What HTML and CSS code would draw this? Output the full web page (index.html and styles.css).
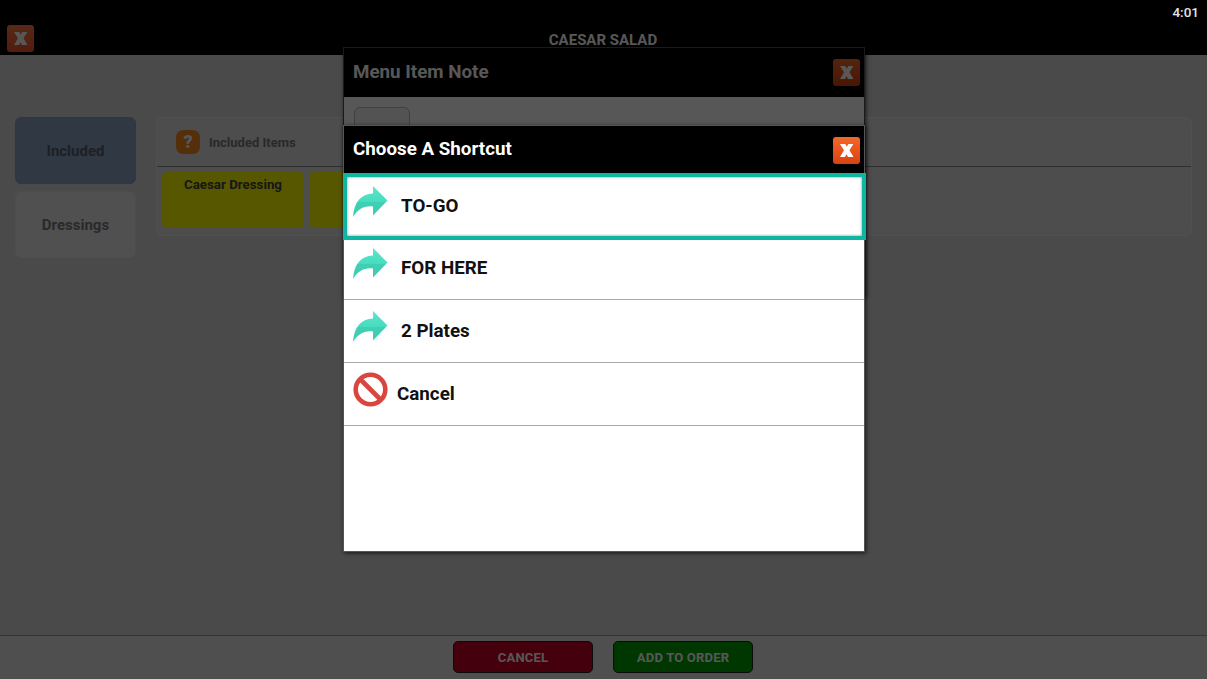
FILE: index.html
```html
<!DOCTYPE html>
<html lang="en">
<head>
    <meta charset="UTF-8">
    <title>Caesar Salad</title>
    <link rel="stylesheet" href="styles.css">
</head>
<body>
    <svg class="defs" width="0" height="0">
        <defs>
            <linearGradient id="arrow_fill" x1="0" y1="0" x2="0" y2="1">
                <stop offset="0" stop-color="#5ce6cb"/>
                <stop offset="0.5" stop-color="#48dcbf"/>
                <stop offset="0.52" stop-color="#3fcfb2"/>
                <stop offset="1" stop-color="#3fcdb0"/>
            </linearGradient>
            <symbol id="arrow" viewBox="0 0 35 31">
                <path d="M0 31C1 16 8 8 20 7.500V0L34.500 14.500 20 29.500V20.500C11 19.500 5 23 0 31Z" fill="url(#arrow_fill)"/>
            </symbol>
            <symbol id="close" viewBox="0 0 27 27">
                <path d="M7 7H12.300L13.800 9.800 15.300 7H20.300L16.500 13.300 20.500 20H15L13.500 17.200 12 20H7L11 13.300Z" fill="#fff"/>
            </symbol>
        </defs>
    </svg>

    <div class="screen">
        <header class="top-bar">
            <button type="button" class="close-btn close-btn-base"><svg><use href="#close"/></svg></button>
            <div class="top-title">CAESAR SALAD</div>
        </header>

        <main class="content">
            <nav class="side">
                <div class="side-btn side-btn-active">Included</div>
                <div class="side-btn">Dressings</div>
            </nav>
            <section class="panel">
                <div class="panel-head">
                    <span class="help-icon">?</span>
                    <span>Included Items</span>
                </div>
                <div class="tiles">
                    <div class="tile">Caesar Dressing</div>
                    <div class="tile"></div>
                </div>
            </section>
        </main>

        <footer class="bottom-bar">
            <button type="button" class="order-btn order-btn-cancel">CANCEL</button>
            <button type="button" class="order-btn order-btn-add">ADD TO ORDER</button>
        </footer>
    </div>

    <div class="dialog note-dialog">
        <div class="dialog-head">
            <span>Menu Item Note</span>
            <button type="button" class="close-btn"><svg><use href="#close"/></svg></button>
        </div>
        <div class="note-body">
            <div class="note-box"></div>
        </div>
    </div>

    <div class="dim"></div>
    <div class="clock">4:01</div>

    <div class="dialog shortcut-dialog">
        <div class="dialog-head">
            <span>Choose A Shortcut</span>
            <button type="button" class="close-btn"><svg><use href="#close"/></svg></button>
        </div>
        <div class="row row-selected">
            <svg class="row-arrow"><use href="#arrow"/></svg>
            <span>TO-GO</span>
        </div>
        <div class="row">
            <svg class="row-arrow"><use href="#arrow"/></svg>
            <span>FOR HERE</span>
        </div>
        <div class="row">
            <svg class="row-arrow"><use href="#arrow"/></svg>
            <span>2 Plates</span>
        </div>
        <div class="row row-cancel">
            <svg class="row-stop" viewBox="0 0 35 35">
                <circle cx="17.500" cy="17.500" r="14.800" fill="none" stroke="#d9453f" stroke-width="4.600"/>
                <path d="M7 7L28 28" stroke="#d9453f" stroke-width="4.600"/>
            </svg>
            <span>Cancel</span>
        </div>
    </div>
</body>
</html>
```

FILE: styles.css
```css
* {
    box-sizing: border-box;
}
body {
    margin: 0;
    width: 1207px;
    height: 679px;
    overflow: hidden;
    position: relative;
    font-family: Roboto, "Liberation Sans", sans-serif;
    background-color: #d8d8d8;
}
.defs {
    position: absolute;
}
.screen {
    height: 679px;
    display: flex;
    flex-direction: column;
}
.top-bar {
    height: 55px;
    flex: none;
    background-color: #000;
    padding: 25px 1px 0 0;
    position: relative;
    display: flex;
    justify-content: center;
}
.top-bar .close-btn {
    position: absolute;
    left: 7px;
    top: 25px;
}
.top-title {
    color: #fff;
    font-size: 15px;
    font-weight: 700;
    line-height: 30px;
}
.close-btn {
    width: 27px;
    height: 27px;
    padding: 0;
    border: none;
    border-radius: 3px;
    background: linear-gradient(#f4682a, #d9420f);
}
.close-btn svg {
    display: block;
    width: 27px;
    height: 27px;
}
.close-btn-base {
    background: linear-gradient(#ff7a42, #f5502a);
}
.content {
    flex: 1;
    display: flex;
    gap: 20px;
    padding: 62px 15px 0;
    align-items: flex-start;
}
.side {
    width: 121px;
    display: flex;
    flex-direction: column;
    gap: 7px;
}
.side-btn {
    height: 67px;
    padding-top: 1px;
    border-radius: 6px;
    background-color: #ebebeb;
    border: 1px solid #e2e2e2;
    color: #7a7a7a;
    font-size: 15px;
    font-weight: 700;
    display: flex;
    align-items: center;
    justify-content: center;
}
.side-btn-active {
    background-color: #8da3c4;
    border-color: #88a0c2;
    color: #555e6e;
}
.panel {
    flex: 1;
    height: 119px;
    border: 1px solid #e9e9e9;
    border-radius: 6px;
    background-color: #e0e0e0;
}
.panel-head {
    height: 49px;
    display: flex;
    align-items: center;
    gap: 9px;
    padding-left: 19px;
    border-bottom: 1px solid #8a8a8a;
    color: #7a7a7a;
    font-size: 13px;
    font-weight: 700;
}
.help-icon {
    width: 24px;
    height: 24px;
    border-radius: 7px;
    background-color: #f58a1f;
    color: #fff;
    font-size: 18px;
    font-weight: 900;
    text-align: center;
    line-height: 24px;
}
.tiles {
    display: flex;
    gap: 5px;
    padding: 5px 5px 0;
}
.tile {
    width: 142px;
    height: 56px;
    border-radius: 5px;
    background-color: #ffff00;
    color: #444;
    font-size: 13.300px;
    font-weight: 700;
    text-align: center;
    padding-top: 5px;
}
.bottom-bar {
    height: 44px;
    flex: none;
    background-color: #e6e6e6;
    border-top: 1px solid #999;
    display: flex;
    justify-content: center;
    gap: 20px;
    padding: 5px 1px 0 0;
}
.order-btn {
    width: 140px;
    height: 32px;
    border: 1px solid #222;
    border-radius: 5px;
    color: #fff;
    font-family: inherit;
    font-size: 13px;
    font-weight: 700;
    letter-spacing: 0.2px;
}
.order-btn-cancel {
    background-color: #c80026;
}
.order-btn-add {
    background-color: #00a000;
}
.dialog {
    position: absolute;
    left: 343px;
    width: 522px;
    border: 1px solid #4c4c4c;
    box-shadow: 1px 1px 4px rgba(0, 0, 0, 0.7);
}
.dialog-head {
    height: 49px;
    background-color: #000;
    color: #fff;
    font-size: 18.800px;
    font-weight: 700;
    display: flex;
    align-items: center;
    justify-content: space-between;
    padding: 0 4px 0 9px;
}
.dialog-head span {
    margin-bottom: 2px;
}
.note-dialog {
    top: 47px;
    height: 250px;
    background-color: #fff;
}
.note-body {
    padding: 10px 10px;
}
.note-box {
    width: 56px;
    height: 60px;
    border: 1px solid #bbb;
    border-radius: 6px;
    background-color: #f4f4f4;
}
.dim {
    position: absolute;
    inset: 0;
    background-color: rgba(0, 0, 0, 0.66);
}
.clock {
    position: absolute;
    top: 4px;
    right: 8px;
    color: #e4e4e4;
    font-size: 13.500px;
    font-weight: 500;
}
.shortcut-dialog {
    top: 125px;
    height: 427px;
    background-color: #fff;
    border-color: #555;
}
.shortcut-dialog .dialog-head {
    height: 48px;
}
.row {
    height: 63px;
    border-bottom: 1px solid #aaa;
    display: flex;
    align-items: center;
    padding-left: 9px;
    color: #111;
    font-size: 18.800px;
    font-weight: 700;
}
.row-selected {
    height: 67px;
    margin: -1px -2px -3px -1px;
    padding: 0 0 2px 6px;
    border: 4px solid #0fb5a0;
    box-shadow: inset 0 0 3px #888;
    position: relative;
}
.row-arrow {
    width: 35px;
    height: 31px;
    flex: none;
    margin: 0 13px 9px 0;
}
.row-stop {
    width: 35px;
    height: 35px;
    flex: none;
    margin: 0 9px 9px 0;
}
```
